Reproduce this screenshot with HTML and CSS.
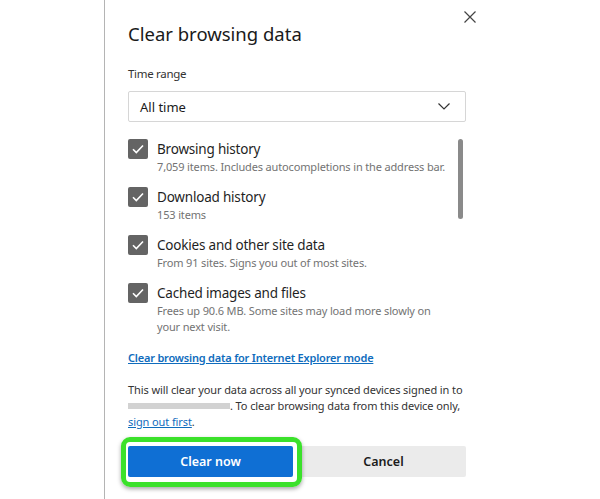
FILE: index.html
```html
<!DOCTYPE html>
<html>
<head>
<meta charset="utf-8">
<title>Clear browsing data</title>
<link rel="stylesheet" href="styles.css">
</head>
<body>
<div class="page">
<div class="dialog">
  <div class="head">
    <h1 class="title">Clear browsing data</h1>
    <button class="close" aria-label="Close">
      <svg width="12" height="12" viewBox="0 0 12 12"><path d="M0.5 0.5L11.5 11.5M11.5 0.5L0.5 11.5" stroke="#444" stroke-width="1.2" fill="none"/></svg>
    </button>
  </div>
  <div class="label">Time range</div>
  <div class="select">
    <span>All time</span>
    <svg width="12" height="7" viewBox="0 0 12 7"><path d="M0.5 0.5L6 6L11.5 0.5" stroke="#333" stroke-width="1.2" fill="none"/></svg>
  </div>
  <div class="list">
    <div class="items">
      <div class="item">
        <span class="box"><svg width="12" height="10" viewBox="0 0 12 10"><path d="M1 5.2L4.3 8.5L11 1.5" stroke="#fff" stroke-width="1.6" fill="none"/></svg></span>
        <div class="text">
          <div class="name">Browsing history</div>
          <div class="desc">7,059 items. Includes autocompletions in the address bar.</div>
        </div>
      </div>
      <div class="item">
        <span class="box"><svg width="12" height="10" viewBox="0 0 12 10"><path d="M1 5.2L4.3 8.5L11 1.5" stroke="#fff" stroke-width="1.6" fill="none"/></svg></span>
        <div class="text">
          <div class="name">Download history</div>
          <div class="desc">153 items</div>
        </div>
      </div>
      <div class="item">
        <span class="box"><svg width="12" height="10" viewBox="0 0 12 10"><path d="M1 5.2L4.3 8.5L11 1.5" stroke="#fff" stroke-width="1.6" fill="none"/></svg></span>
        <div class="text">
          <div class="name">Cookies and other site data</div>
          <div class="desc">From 91 sites. Signs you out of most sites.</div>
        </div>
      </div>
      <div class="item">
        <span class="box"><svg width="12" height="10" viewBox="0 0 12 10"><path d="M1 5.2L4.3 8.5L11 1.5" stroke="#fff" stroke-width="1.6" fill="none"/></svg></span>
        <div class="text">
          <div class="name">Cached images and files</div>
          <div class="desc">Frees up 90.6 MB. Some sites may load more slowly on your next visit.</div>
        </div>
      </div>
    </div>
    <div class="track"><div class="thumb"></div></div>
  </div>
  <a class="ie" href="#">Clear browsing data for Internet Explorer mode</a>
  <p class="note">This will clear your data across all your synced devices signed in to <span class="redact"></span>. To clear browsing data from this device only, <a href="#">sign out first</a>.</p>
  <div class="buttons">
    <button class="btn primary">Clear now</button>
    <button class="btn">Cancel</button>
  </div>
</div>
</div>
</body>
</html>
```

FILE: styles.css
```css
html,body{margin:0;padding:0;background:#fff}
body{font-family:"Noto Sans","Open Sans","DejaVu Sans",sans-serif;color:#1b1b1b}
.page{padding-left:104px;height:499px;overflow:hidden}
.dialog{width:338px;height:499px;padding:0 24px 0 23px;border-left:1px solid #b4b4b4;box-sizing:content-box}
.head{display:flex;align-items:flex-start;justify-content:space-between}
.title{margin:20px 0 0;font-size:18.5px;font-weight:400;line-height:28px;color:#1a1a1a}
.close{margin:11px -10px 0 0;padding:0;border:0;background:none;width:12px;height:12px;line-height:0}
.label{margin-top:17px;font-size:11.5px;letter-spacing:-0.3px;line-height:18px;color:#333}
.select{margin-top:8px;height:29px;border:1px solid #d6d6d6;border-radius:2px;display:flex;align-items:center;justify-content:space-between;padding:0 15px 0 11px;font-size:13px;color:#1b1b1b}
.list{margin-top:17px;display:flex;justify-content:space-between}
.items{display:flex;flex-direction:column;gap:12px}
.item{display:flex;gap:9px}
.box{width:20px;height:20px;border-radius:2px;background:#646464;display:flex;align-items:center;justify-content:center;flex:none}
.name{font-size:13.5px;letter-spacing:-0.2px;line-height:20px;color:#1f1f1f}
.desc{font-size:11px;letter-spacing:-0.15px;line-height:16px;color:#737373;max-width:292px}
.track{width:5px;margin-right:3px}
.thumb{height:80px;border-radius:3px;background:#8a8a8a}
.ie{display:inline-block;margin-top:15px;font-size:11px;letter-spacing:-0.2px;font-weight:600;line-height:16px;color:#0f6cbd}
.note{margin:15px 0 0;font-size:11px;letter-spacing:-0.1px;line-height:16px;color:#333}
.note a{color:#0f6cbd}
.redact{display:inline-block;width:102px;height:6px;background:#d2d2d2;vertical-align:1px}
.buttons{margin-top:16px;display:grid;grid-template-columns:1fr 1fr;gap:8px}
.btn{height:31px;border:0;border-radius:2px;background:#ebebeb;font-family:inherit;font-size:12.5px;font-weight:600;color:#1b1b1b}
.primary{position:relative;background:#0f6fd4;color:#fff}
.primary::before{content:"";position:absolute;top:-9px;left:-7px;right:-9px;bottom:-10px;border:5px solid #3be12b;border-radius:9px;box-shadow:0 2px 4px rgba(0,0,0,.35)}
```
